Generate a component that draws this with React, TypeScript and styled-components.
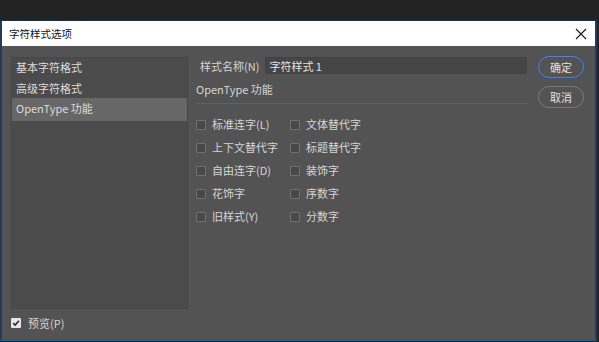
import React from 'react';
import styled, {createGlobalStyle} from 'styled-components';

const categories = ['基本字符格式', '高级字符格式', 'OpenType 功能'];

const options = [
    '标准连字(L)', '文体替代字',
    '上下文替代字', '标题替代字',
    '自由连字(D)', '装饰字',
    '花饰字', '序数字',
    '旧样式(Y)', '分数字',
];

const App: React.FC = () => {
    return (
        <>
            <GlobalStyle/>
            <Desktop>
                <Window>
                    <TitleBar>
                        <Title>字符样式选项</Title>
                        <CloseButton>
                            <svg width="12" height="12" viewBox="0 0 12 12">
                                <path d="M1 1L11 11M11 1L1 11" stroke="#1a1a1a" strokeWidth="1.1"/>
                            </svg>
                        </CloseButton>
                    </TitleBar>
                    <Body>
                        <Main>
                            <CategoryList>
                                {categories.map((c, i) => (
                                    <CategoryItem key={c} $selected={i === 2}>{c}</CategoryItem>
                                ))}
                            </CategoryList>
                            <Form>
                                <NameRow>
                                    <NameLabel>样式名称(N)</NameLabel>
                                    <NameInput value="字符样式 1" readOnly/>
                                </NameRow>
                                <SectionTitle>OpenType 功能</SectionTitle>
                                <Divider/>
                                <OptionGrid>
                                    {options.map(o => (
                                        <Option key={o}>
                                            <Box/>
                                            <OptionLabel>{o}</OptionLabel>
                                        </Option>
                                    ))}
                                </OptionGrid>
                            </Form>
                            <Buttons>
                                <DialogButton $primary>确定</DialogButton>
                                <DialogButton>取消</DialogButton>
                            </Buttons>
                        </Main>
                        <Footer>
                            <CheckedBox>
                                <svg width="8" height="8" viewBox="0 0 8 8">
                                    <path d="M1.2 4.2L3.2 6.1L6.9 1.8" stroke="#2e2e2e" strokeWidth="1.6" fill="none"/>
                                </svg>
                            </CheckedBox>
                            <OptionLabel>预览(P)</OptionLabel>
                        </Footer>
                    </Body>
                </Window>
            </Desktop>
        </>
    );
};

export default App;

const GlobalStyle = createGlobalStyle`
body {
margin: 0;
background: #232323;
font-family: "Noto Sans CJK SC", "Noto Sans", sans-serif;
}
`

const Desktop = styled.div`
width: 599px;
height: 342px;
padding-top: 20px;
box-sizing: border-box;
background: #232323;
`

const Window = styled.div`
width: 597px;
height: 321px;
box-sizing: border-box;
display: flex;
flex-direction: column;
border-top: 1px solid #1b3148;
border-left: 2px solid #213c57;
border-right: 2px solid #213c57;
border-bottom: 2px solid #2c5b82;
`

const TitleBar = styled.div`
height: 25px;
flex-shrink: 0;
display: flex;
align-items: center;
justify-content: space-between;
padding: 0 8px 0 7px;
background: #ffffff;
`

const Title = styled.span`
font-size: 10.5px;
line-height: 14px;
color: #111;
`

const CloseButton = styled.div`
display: flex;
width: 12px;
height: 12px;
`

const Body = styled.div`
flex: 1;
display: flex;
flex-direction: column;
padding: 11px 10px 0 9px;
background: #535353;
`

const Main = styled.div`
display: flex;
height: 252px;
`

const CategoryList = styled.div`
width: 177px;
flex-shrink: 0;
box-sizing: border-box;
padding-top: 0;
background: #4b4b4b;
border: 1px solid #464646;
`

const CategoryItem = styled.div<{ $selected?: boolean }>`
height: 21px;
box-sizing: border-box;
display: flex;
align-items: center;
padding: 0 0 3px 4px;
margin-top: ${({$selected}) => $selected ? '-2px' : '0'};
height: ${({$selected}) => $selected ? '23px' : '21px'};
font-size: 11px;
color: #dcdcdc;
background: ${({$selected}) => $selected ? '#676767' : 'transparent'};
`

const Form = styled.div`
width: 332px;
margin: 0 10px 0 8px;
display: flex;
flex-direction: column;
`

const NameRow = styled.div`
display: flex;
align-items: center;
height: 17px;
padding-left: 4px;
margin-right: 1px;
`

const NameLabel = styled.span`
font-size: 11px;
color: #d6d6d6;
margin-right: 6px;
white-space: nowrap;
`

const NameInput = styled.input`
flex: 1;
min-width: 0;
height: 17px;
box-sizing: border-box;
padding: 0 3px;
border: 1px solid #414141;
background: #454545;
color: #e4e4e4;
font-family: "Noto Sans CJK SC", "Noto Sans", sans-serif;
font-size: 11px;
outline: none;
`

const SectionTitle = styled.div`
margin-top: 7px;
font-size: 11px;
line-height: 16px;
color: #d6d6d6;
`

const Divider = styled.div`
margin-top: 6px;
height: 1px;
background: #616161;
`

const OptionGrid = styled.div`
margin-top: 9px;
display: grid;
grid-template-columns: 94px auto;
grid-auto-rows: 23px;
`

const Option = styled.div`
display: flex;
align-items: center;
padding-bottom: 2px;
`

const Box = styled.div`
width: 10px;
height: 10px;
box-sizing: border-box;
border: 1px solid #707070;
border-radius: 1px;
background: #484848;
margin: 2px 6px 0 0;
`

const OptionLabel = styled.span`
font-size: 11px;
line-height: 16px;
color: #d6d6d6;
white-space: nowrap;
`

const Buttons = styled.div`
width: 46px;
margin-top: -1px;
display: flex;
flex-direction: column;
gap: 8px;
`

const DialogButton = styled.div<{ $primary?: boolean }>`
height: 22px;
box-sizing: border-box;
display: flex;
align-items: center;
justify-content: center;
border-radius: 11px;
font-size: 11px;
color: #e0e0e0;
border: 1px solid ${({$primary}) => $primary ? '#5a7ec8' : '#7a7a7a'};
box-shadow: ${({$primary}) => $primary ? '0 0 0 1px #34508a' : 'none'};
`

const Footer = styled.div`
height: 27px;
display: flex;
align-items: center;
`

const CheckedBox = styled.div`
width: 10px;
height: 10px;
display: flex;
align-items: center;
justify-content: center;
border-radius: 1px;
background: #e6e6e6;
margin-right: 7px;
`
